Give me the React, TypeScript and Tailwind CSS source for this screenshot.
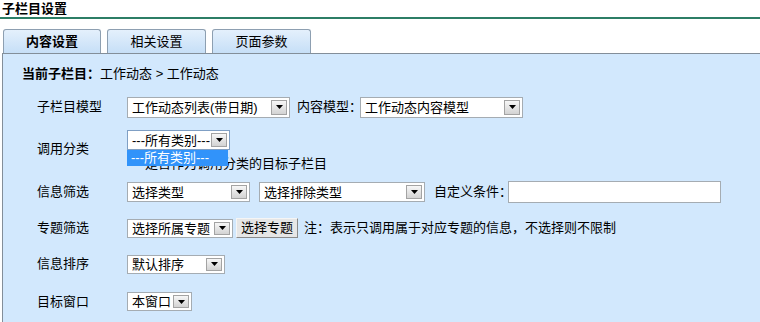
import React from "react";

const font = { fontFamily: '"Liberation Sans", "Noto Sans CJK SC", sans-serif' };

function Arrow() {
  return (
    <div className="absolute right-[2px] top-[2px] bottom-[2px] w-[16px] border border-[#a3a3a3] bg-gradient-to-b from-[#f7f7f7] to-[#d3d3d3] flex items-center justify-center">
      <svg width="7" height="4" viewBox="0 0 7 4">
        <path d="M0 0 H7 L3.5 4 Z" fill="#000" />
      </svg>
    </div>
  );
}

function Select({ w, h, text, focus }: { w: number; h: number; text: string; focus?: boolean }) {
  return (
    <div
      className={
        "relative shrink-0 bg-white border flex items-center pl-[4px] text-[13px] leading-[15px] whitespace-nowrap " +
        (focus ? "border-[#7f9fc4]" : "border-[#a5acb2]")
      }
      style={{ width: w, height: h }}
    >
      <span>{text}</span>
      <Arrow />
    </div>
  );
}

export default function App() {
  return (
    <div className="w-[760px] h-[322px] bg-white overflow-hidden text-black" style={font}>
      <div className="h-[17px] pl-[2px] text-[13px] font-bold leading-[17px]">子栏目设置</div>
      <div className="h-[2px] bg-[#2c7e66]" />
      <div className="flex gap-[6px] ml-[3px] mt-[10px]">
        <div className="w-[98px] h-[24px] rounded-t-[3px] border border-b-0 border-[#8d9fb1] bg-gradient-to-b from-[#e4f0fc] to-[#c6dff7] flex items-center justify-center text-[13px] font-bold">内容设置</div>
        <div className="w-[99px] h-[24px] rounded-t-[3px] border border-b-0 border-[#8d9fb1] bg-gradient-to-b from-[#e4f0fc] to-[#c6dff7] flex items-center justify-center text-[13px]">相关设置</div>
        <div className="w-[99px] h-[24px] rounded-t-[3px] border border-b-0 border-[#8d9fb1] bg-gradient-to-b from-[#e4f0fc] to-[#c6dff7] flex items-center justify-center text-[13px]">页面参数</div>
      </div>
      <div className="ml-[2px] h-[280px] border-l border-t border-[#838e99] bg-[#d2e8fd] pl-[19px] text-[13px]">
        <div className="mt-[10px] h-[20px] flex items-center whitespace-nowrap">
          <span className="font-bold">当前子栏目：</span>
          <span>工作动态 &gt; 工作动态</span>
        </div>
        <div className="pl-[15px]">
          <div className="mt-[12px] h-[22px] flex items-center whitespace-nowrap">
            <div className="w-[90px] shrink-0">子栏目模型</div>
            <Select w={163} h={21} text="工作动态列表(带日期)" />
            <div className="ml-[7px] w-[63px] shrink-0">内容模型：</div>
            <Select w={163} h={21} text="工作动态内容模型" />
          </div>
          <div className="mt-[10px] h-[44px] flex">
            <div className="w-[90px] h-[42px] shrink-0 flex items-center">调用分类</div>
            <div className="flex flex-col">
              <div className="relative mt-[2px]">
                <Select w={103} h={20} text="---所有类别---" focus />
                <div className="absolute z-10 left-0 top-full w-[101px] h-[16px] bg-[#3193fa] text-white leading-[16px] pl-[4px] whitespace-nowrap">---所有类别---</div>
              </div>
              <div className="mt-[6px] h-[16px] leading-[16px] pl-[18px] whitespace-nowrap">是否作为调用分类的目标子栏目</div>
            </div>
          </div>
          <div className="mt-[9px] h-[22px] flex items-center whitespace-nowrap">
            <div className="w-[90px] shrink-0">信息筛选</div>
            <Select w={123} h={20} text="选择类型" />
            <div className="ml-[9px]">
              <Select w={166} h={20} text="选择排除类型" />
            </div>
            <div className="ml-[9px] w-[74px] shrink-0">自定义条件：</div>
            <div className="w-[213px] h-[22px] shrink-0 bg-white border border-[#a5acb2]" />
          </div>
          <div className="mt-[15px] h-[20px] flex items-center whitespace-nowrap">
            <div className="w-[90px] shrink-0">专题筛选</div>
            <Select w={106} h={19} text="选择所属专题" />
            <div className="ml-[3px] w-[62px] h-[20px] shrink-0 bg-[#e6e6e6] border border-t-[#f5f5f5] border-l-[#f5f5f5] border-r-[#8a8a8a] border-b-[#8a8a8a] flex items-center justify-center">选择专题</div>
            <div className="ml-[6px]">注：表示只调用属于对应专题的信息，不选择则不限制</div>
          </div>
          <div className="mt-[16px] h-[20px] flex items-center">
            <div className="w-[90px] shrink-0">信息排序</div>
            <Select w={98} h={19} text="默认排序" />
          </div>
          <div className="mt-[18px] h-[19px] flex items-center">
            <div className="w-[90px] shrink-0">目标窗口</div>
            <Select w={65} h={19} text="本窗口" />
          </div>
        </div>
      </div>
    </div>
  );
}
